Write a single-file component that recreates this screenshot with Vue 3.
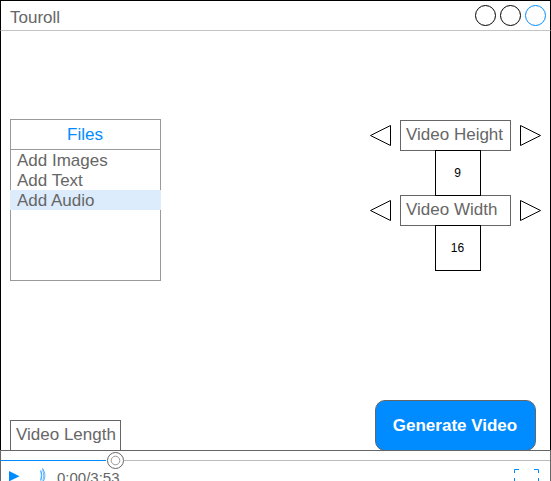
<script setup>
const files = ['Add Images', 'Add Text', 'Add Audio']
const selected = 'Add Audio'
const settings = [
  { label: 'Video Height', value: 9 },
  { label: 'Video Width', value: 16 },
]
</script>

<template>
  <div class="window">
    <header class="titlebar">
      <span class="title">Touroll</span>
      <div class="controls">
        <svg v-for="n in 3" :key="n" class="control" :class="{ active: n === 3 }" viewBox="0 0 22 22">
          <circle cx="10.5" cy="11.5" r="10" />
        </svg>
      </div>
    </header>

    <main class="content">
      <div class="top">
        <section class="files">
          <h2 class="files-title">Files</h2>
          <ul class="file-list">
            <li v-for="f in files" :key="f" :class="{ selected: f === selected }">{{ f }}</li>
          </ul>
        </section>
        <section class="settings">
          <div v-for="s in settings" :key="s.label" class="setting">
            <div class="setting-row">
              <svg class="arrow" viewBox="0 0 22 22"><path d="M21.5 .5V20.5L1.5 10.5Z" /></svg>
              <div class="label">{{ s.label }}</div>
              <svg class="arrow" viewBox="0 0 22 22"><path d="M.5 .5V20.5L20.5 10.5Z" /></svg>
            </div>
            <div class="value">{{ s.value }}</div>
          </div>
        </section>
      </div>
      <div class="bottom">
        <div class="label length">Video Length</div>
        <button class="generate">Generate Video</button>
      </div>
    </main>

    <footer class="player">
      <div class="track">
        <div class="played"></div>
        <svg class="thumb" viewBox="0 0 18 18">
          <circle cx="9.5" cy="9.5" r="8" stroke="#666" />
          <circle cx="9.5" cy="9.5" r="4.3" stroke="#999" />
        </svg>
        <div class="remaining"></div>
      </div>
      <div class="player-row">
        <svg class="play" viewBox="0 0 11 11"><path d="M0 0L10.5 5.2L0 10.4Z" /></svg>
        <svg class="volume" viewBox="0 0 6 15">
          <path d="M.8 2.5Q3.2 7 .8 12.5Q1.8 7 .8 2.5ZM2.6 .5Q7.4 7.5 2.6 14.5Q5 7.5 2.6 .5Z" />
        </svg>
        <span class="time">0:00/3:53</span>
        <svg class="fullscreen" viewBox="0 0 25 20">
          <path d="M.5 4V.5H5M20 .5H24.5V4M.5 9V14.5M24.5 9V14.5" />
        </svg>
      </div>
    </footer>
  </div>
</template>

<style>
body { margin: 0; background: #fff; overflow: hidden; }
</style>

<style scoped>
* { box-sizing: border-box; }
.window {
  width: 551px;
  height: 481px;
  display: flex;
  flex-direction: column;
  overflow: hidden;
  font-family: "Liberation Sans", Arial, sans-serif;
  font-size: 17px;
  line-height: 20px;
  color: #666;
  white-space: nowrap;
}
.titlebar {
  height: 31px;
  flex: none;
  display: flex;
  justify-content: space-between;
  border: 1px solid #000;
  border-bottom-color: #c4c4c4;
  padding: 3px 3px 0 9px;
}
.title { padding-top: 4px; }
.controls { display: flex; gap: 3px; }
.control { width: 22px; height: 22px; fill: #fff; stroke: #000; }
.control.active { stroke: #008cff; }
.content {
  height: 419px;
  flex: none;
  display: flex;
  flex-direction: column;
  justify-content: space-between;
  border: solid #000;
  border-width: 0 1px;
  padding: 88px 9px 0;
}
.top { display: flex; justify-content: space-between; align-items: flex-start; }
.files { width: 151px; height: 162px; border: 1px solid #999; }
.files-title {
  margin: 0;
  height: 30px;
  padding-right: 1px;
  border-bottom: 1px solid #999;
  color: #008cff;
  font-size: 17px;
  font-weight: 400;
  line-height: 29px;
  text-align: center;
}
.file-list { list-style: none; margin: 0 -1px; padding: 0; }
.file-list li { height: 20px; padding-left: 7px; line-height: 22px; }
.file-list .selected { background: #dcecfd; }
.settings { padding-top: 1px; margin-right: -1px; }
.setting { height: 75px; display: flex; flex-direction: column; align-items: center; }
.setting-row { display: flex; align-items: center; gap: 9px; }
.arrow { width: 22px; height: 22px; fill: #fff; stroke: #000; }
.label {
  width: 111px;
  height: 31px;
  border: 1px solid #666;
  background: #fff;
  padding: 4px 0 0 5px;
}
.value {
  position: relative;
  z-index: 1;
  flex: none;
  width: 46px;
  height: 46px;
  margin: -1px 0 0 4px;
  border: 1px solid #000;
  color: #000;
  font-size: 12px;
  line-height: 44px;
  text-align: center;
}
.bottom { display: flex; justify-content: space-between; align-items: flex-end; padding-right: 5px; }
.length { height: 30px; border-bottom: 0; }
.generate {
  width: 161px;
  height: 51px;
  margin-bottom: -1px;
  padding: 0 1px 0 0;
  border: 1px solid #666;
  border-radius: 10px;
  background: #008cff;
  color: #fff;
  font: bold 17px "Liberation Sans", Arial, sans-serif;
}
.player { height: 31px; flex: none; border: 1px solid #666; border-bottom: 0; overflow: hidden; }
.track { height: 18px; display: flex; align-items: center; }
.played { width: 105px; height: 1px; background: #008cff; }
.thumb { width: 18px; height: 18px; fill: #fff; stroke-width: 1; }
.remaining { flex: 1; height: 1px; background: #bbb; }
.player-row { display: flex; align-items: flex-start; }
.play { width: 11px; height: 11px; margin: 2px 0 0 8px; fill: #008cff; }
.volume { width: 6px; height: 15px; margin: -1px 0 0 20px; fill: #fff; stroke: #008cff; stroke-width: .6; }
.time { margin: -1px 0 0 11px; font-size: 15px; }
.fullscreen { width: 25px; height: 20px; margin: 0 11px 0 auto; fill: none; stroke: #008cff; }
</style>
